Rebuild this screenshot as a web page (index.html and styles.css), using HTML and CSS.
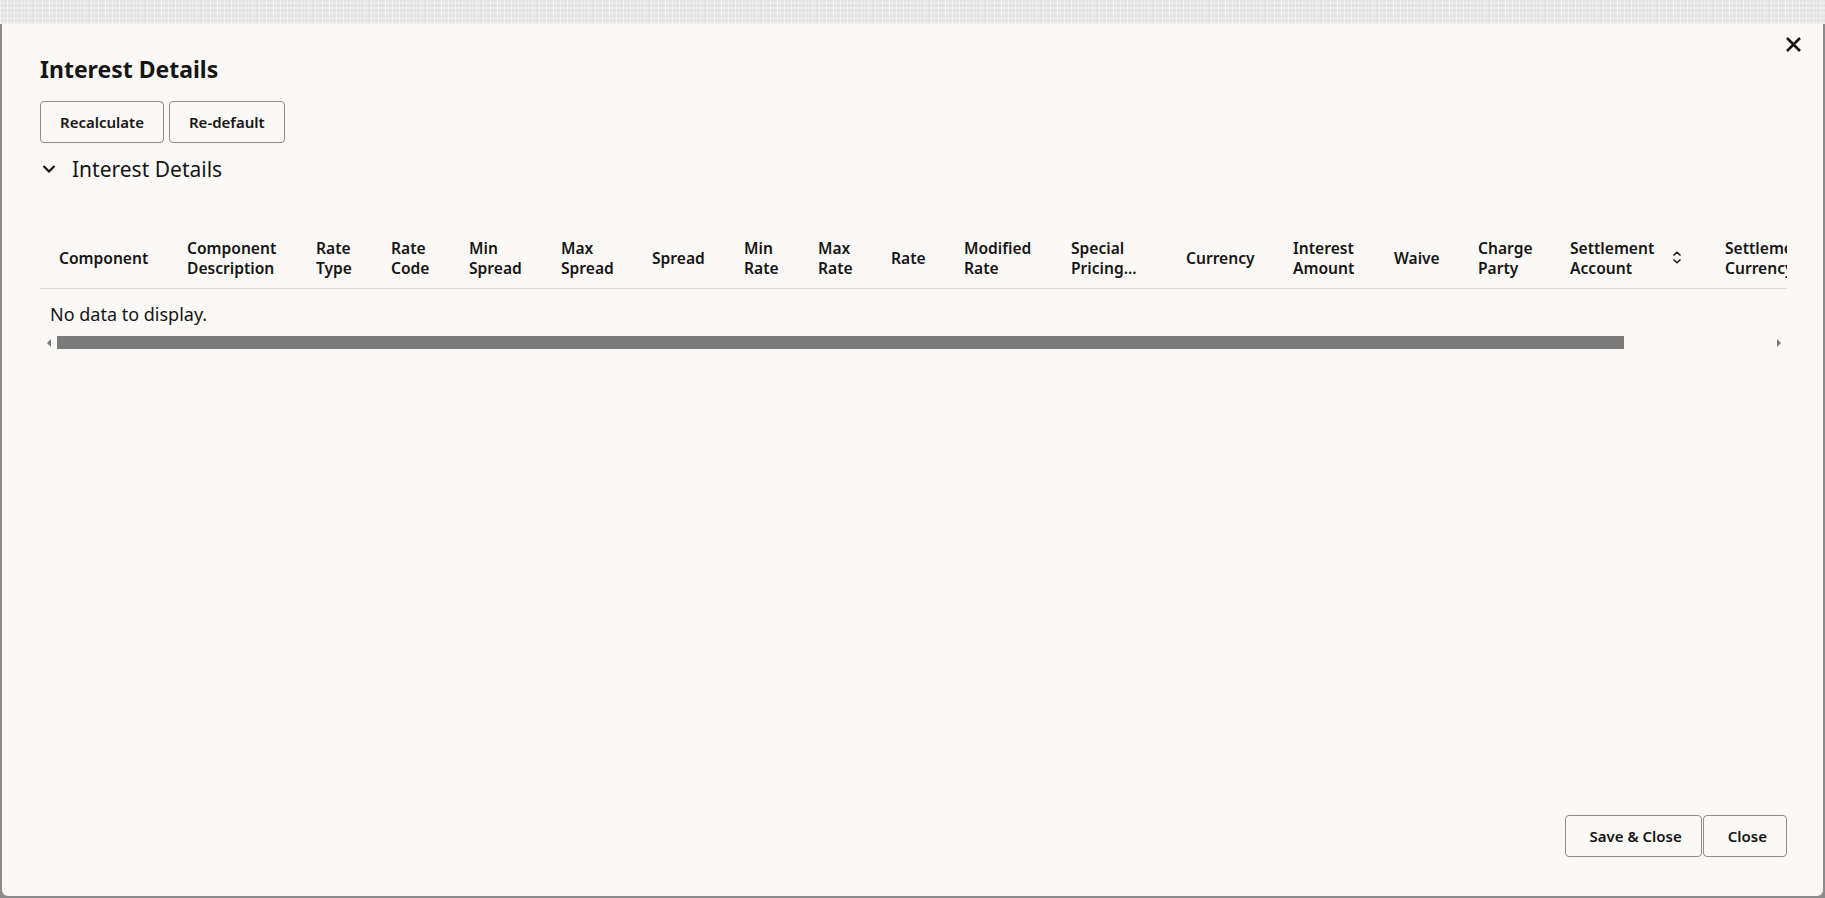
FILE: index.html
```html
<!DOCTYPE html>
<html lang="en">
<head>
    <meta charset="UTF-8">
    <title>Interest Details</title>
    <link rel="stylesheet" href="styles.css">
</head>
<body>
<!--背景-->
<div class="backdrop"></div>

<!--弹窗-->
<div class="dialog">
    <button class="closeX" aria-label="Close">
        <svg width="17" height="17" viewBox="0 0 17 17">
            <path d="M2 2 L15 15 M15 2 L2 15" stroke="#161513" stroke-width="2.6" fill="none"/>
        </svg>
    </button>

    <div class="dialogBody">
        <h1 class="title">Interest Details</h1>

        <div class="toolbar">
            <button class="btn">Recalculate</button>
            <button class="btn">Re-default</button>
        </div>

        <div class="sectionHead">
            <svg class="chevron" width="14" height="10" viewBox="0 0 14 10">
                <path d="M1.5 2 L7 7.5 L12.5 2" stroke="#161513" stroke-width="2.2" fill="none"/>
            </svg>
            <span>Interest Details</span>
        </div>

        <div class="grid">
            <div class="gridClip">
                <div class="headRow">
                    <div class="cell c1">Component</div>
                    <div class="cell c2">Component<br>Description</div>
                    <div class="cell c3">Rate<br>Type</div>
                    <div class="cell c4">Rate<br>Code</div>
                    <div class="cell c5">Min<br>Spread</div>
                    <div class="cell c6">Max<br>Spread</div>
                    <div class="cell c7">Spread</div>
                    <div class="cell c8">Min<br>Rate</div>
                    <div class="cell c9">Max<br>Rate</div>
                    <div class="cell c10">Rate</div>
                    <div class="cell c11">Modified<br>Rate</div>
                    <div class="cell c12">Special<br>Pricing...</div>
                    <div class="cell c13">Currency</div>
                    <div class="cell c14">Interest<br>Amount</div>
                    <div class="cell c15">Waive</div>
                    <div class="cell c16">Charge<br>Party</div>
                    <div class="cell c17">
                        <span>Settlement<br>Account</span>
                        <svg class="sortIcon" width="10" height="13" viewBox="0 0 10 13">
                            <path d="M1.5 4.5 L5 1.2 L8.5 4.5 M1.5 8.5 L5 11.8 L8.5 8.5" stroke="#161513" stroke-width="1.5" fill="none"/>
                        </svg>
                    </div>
                    <div class="cell c18">Settlement<br>Currency</div>
                </div>
                <div class="emptyRow">No data to display.</div>
            </div>

            <div class="hScroll">
                <span class="arrowBox"><span class="arrowL"></span></span>
                <div class="thumb"></div>
                <div class="spacer"></div>
                <span class="arrowBox"><span class="arrowR"></span></span>
            </div>
        </div>
    </div>

    <div class="footer">
        <button class="btn btnFoot">Save &amp; Close</button>
        <button class="btn btnFoot">Close</button>
    </div>
</div>
</body>
</html>
```

FILE: styles.css
```css
* {
    margin: 0;
    padding: 0;
    box-sizing: border-box;
}

html, body {
    height: 100%;
}

body {
    display: flex;
    flex-direction: column;
    background-color: #8b8b8b;
    font-family: "Noto Sans", "Open Sans", sans-serif;
    color: #161513;
    overflow: hidden;
}

.backdrop {
    height: 24px;
    flex-shrink: 0;
    background-color: #e2e2e2;
    background-image:
        repeating-linear-gradient(90deg, rgba(255, 255, 255, 0.55) 0 1px, transparent 1px 3px, rgba(255, 255, 255, 0.3) 3px 4px, transparent 4px 7px),
        repeating-linear-gradient(0deg, rgba(255, 255, 255, 0.35) 0 2px, transparent 2px 5px);
}

.dialog {
    position: relative;
    flex-grow: 1;
    margin: 0 2px 2px 2px;
    background-color: #faf9f8;
    border-radius: 0 0 6px 6px;
    display: flex;
    flex-direction: column;
    padding: 29px 36px 39px 38px;
}

.closeX {
    position: absolute;
    top: 12px;
    right: 21px;
    width: 17px;
    height: 17px;
    border: none;
    background: none;
    display: flex;
}

.dialogBody {
    flex-grow: 1;
    display: flex;
    flex-direction: column;
}

.title {
    font-size: 23px;
    line-height: 32px;
    font-weight: 700;
}

.toolbar {
    display: flex;
    gap: 5px;
    margin-top: 16px;
}

.btn {
    height: 42px;
    padding: 0 19px;
    border: 1px solid #8f8d89;
    border-radius: 4px;
    background: transparent;
    font-family: inherit;
    font-size: 15px;
    font-weight: 600;
    color: #161513;
}

.sectionHead {
    display: flex;
    align-items: center;
    margin-top: 12px;
    height: 28px;
    font-size: 21px;
}

.chevron {
    margin-left: 2px;
    margin-right: 16px;
}

.grid {
    margin-top: 44px;
}

.gridClip {
    overflow: hidden;
}

.headRow {
    display: flex;
    height: 62px;
    border-bottom: 1px solid #dedcd8;
}

.cell {
    flex-shrink: 0;
    display: flex;
    align-items: center;
    padding-left: 12px;
    font-size: 15.6px;
    line-height: 20px;
    font-weight: 600;
    white-space: nowrap;
    overflow: hidden;
}

.c1 { width: 135px; padding-left: 19px; }
.c2 { width: 129px; }
.c3 { width: 75px; }
.c4 { width: 78px; }
.c5 { width: 92px; }
.c6 { width: 91px; }
.c7 { width: 92px; }
.c8 { width: 74px; }
.c9 { width: 73px; }
.c10 { width: 73px; }
.c11 { width: 107px; }
.c12 { width: 115px; }
.c13 { width: 107px; }
.c14 { width: 101px; }
.c15 { width: 84px; }
.c16 { width: 92px; }
.c17 { width: 155px; }
.c18 { width: 150px; }

.sortIcon {
    margin-left: 18px;
}

.emptyRow {
    height: 47px;
    display: flex;
    align-items: center;
    padding-left: 10px;
    padding-top: 2px;
    font-size: 18px;
}

.hScroll {
    display: flex;
    align-items: center;
    height: 13px;
}

.arrowBox {
    width: 17px;
    height: 13px;
    display: flex;
    align-items: center;
    justify-content: center;
}

.arrowL {
    width: 0;
    height: 0;
    border-top: 4px solid transparent;
    border-bottom: 4px solid transparent;
    border-right: 4px solid #7a7a7a;
}

.arrowR {
    width: 0;
    height: 0;
    border-top: 4px solid transparent;
    border-bottom: 4px solid transparent;
    border-left: 4px solid #7a7a7a;
}

.thumb {
    width: 1567px;
    height: 13px;
    background-color: #7b7b7b;
}

.spacer {
    flex-grow: 1;
}

.footer {
    display: flex;
    justify-content: flex-end;
    gap: 1px;
}

.btnFoot {
    padding: 0 19px 0 24px;
}
```
